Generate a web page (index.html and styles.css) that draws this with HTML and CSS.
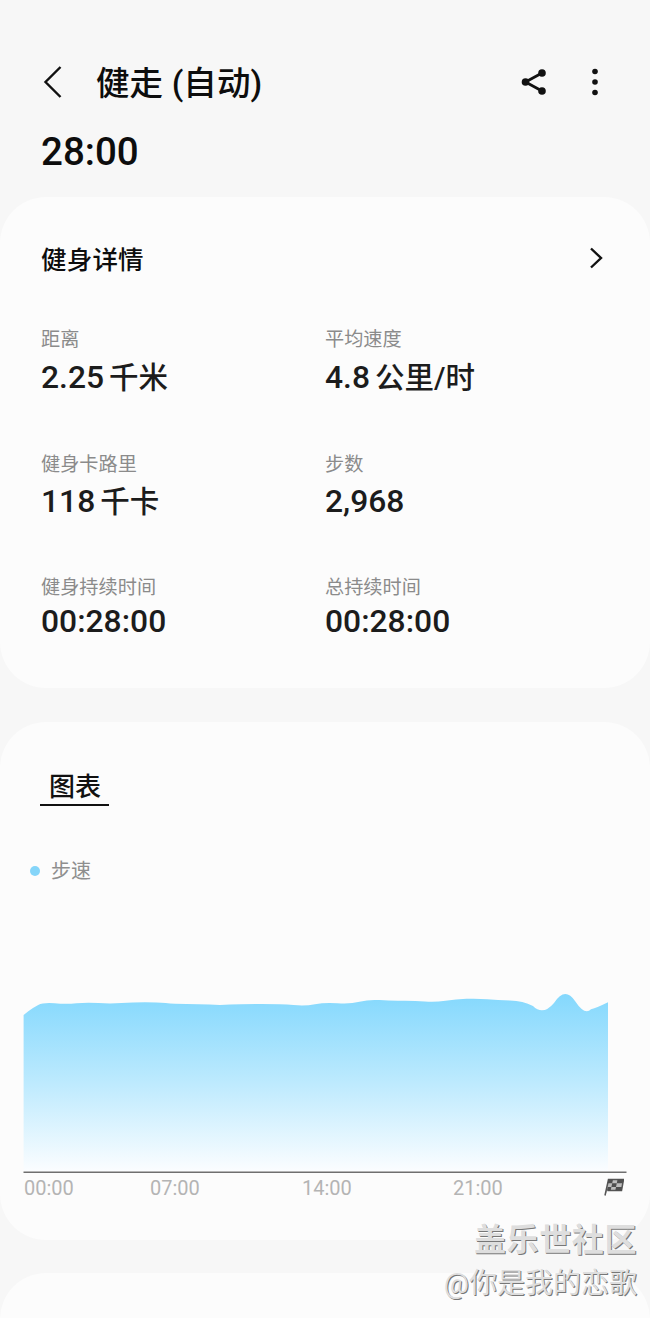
FILE: index.html
```html
<!DOCTYPE html>
<html lang="zh-CN">
<head>
<meta charset="utf-8">
<title>健走 (自动)</title>
<link rel="stylesheet" href="styles.css">
</head>
<body>
<div class="page">
  <header class="topbar">
    <svg class="icon-back" viewBox="0 0 22 34" width="22" height="34"><path d="M18.500 2 L3.500 17 L18.500 32" fill="none" stroke="#111" stroke-width="2.400"/></svg>
    <h1 class="title">健走 (自动)</h1>
    <svg class="icon-share" viewBox="0 0 26 28" width="26" height="28"><g fill="#111"><circle cx="21" cy="5" r="3.800"/><circle cx="21" cy="23" r="3.800"/><circle cx="4.500" cy="14" r="3.800"/></g><path d="M21 5 L4.500 14 L21 23" fill="none" stroke="#111" stroke-width="2.800"/></svg>
    <svg class="icon-more" viewBox="0 0 8 28" width="8" height="28"><g fill="#111"><circle cx="4" cy="3.500" r="2.800"/><circle cx="4" cy="14" r="2.800"/><circle cx="4" cy="24.500" r="2.800"/></g></svg>
  </header>
  <div class="duration">28:00</div>

  <section class="card card-details">
    <div class="card-head">
      <h2 class="card-title">健身详情</h2>
      <svg class="icon-next" viewBox="0 0 14 22" width="14" height="22"><path d="M2 1.500 L12 11 L2 20.500" fill="none" stroke="#111" stroke-width="2.400"/></svg>
    </div>
    <div class="stats">
      <div class="stat"><div class="stat-label">距离</div><div class="stat-value">2.25 <span class="unit">千米</span></div></div>
      <div class="stat"><div class="stat-label">平均速度</div><div class="stat-value">4.8 <span class="unit">公里/时</span></div></div>
      <div class="stat stat-mid"><div class="stat-label">健身卡路里</div><div class="stat-value">118 <span class="unit">千卡</span></div></div>
      <div class="stat stat-mid"><div class="stat-label">步数</div><div class="stat-value">2,968</div></div>
      <div class="stat stat-tight"><div class="stat-label">健身持续时间</div><div class="stat-value">00:28:00</div></div>
      <div class="stat stat-tight"><div class="stat-label">总持续时间</div><div class="stat-value">00:28:00</div></div>
    </div>
  </section>

  <section class="card card-chart">
    <div class="tab">图表</div>
    <div class="legend"><span class="legend-dot"></span><span class="legend-text">步速</span></div>
    <svg class="chart" viewBox="0 -10 650 193" width="650" height="193">
      <defs>
        <linearGradient id="pace" x1="0" y1="0" x2="0" y2="1">
          <stop offset="0" stop-color="#84d8fd"/>
          <stop offset="0.5" stop-color="#bdeafe"/>
          <stop offset="1" stop-color="#fbfdff"/>
        </linearGradient>
      </defs>
      <path fill="url(#pace)" d="M23.600 25 L28.300 21.300 Q33 17.700 38.200 15 Q43.500 12.300 54.700 13.300 Q66 14.300 76.500 13.300 Q87 12.300 98.500 13.100 Q110 14 121.500 13.100 Q133 12.300 145 12.300 Q157.500 12.300 165.700 13.100 Q174 14 186.500 14 Q199 14 209.500 14.600 Q220 15.300 230 14.600 Q240 14 261 14 Q282 14 293.500 15.100 Q305 16.300 315 14.300 Q325 12.300 337.500 13.300 Q350 14.300 359.500 11.800 Q369 9.300 379.500 10.100 Q390 11 402.300 10.800 Q414.600 10.700 424.800 11.500 Q435 12.300 445.500 10.800 Q456 9.300 466.500 8.800 Q477 8.300 487.200 9.300 Q497.500 10.300 510 10.500 Q523 10.700 533 16 Q543 26 554 13 Q565 -4 575 11 Q585 26 591 19.200 Q597 17.700 608 12.300 V181 H23.600 Z"/>
      <rect x="23.500" y="181.500" width="603" height="1.500" fill="#6f6f6f"/>
    </svg>
    <div class="axis">
      <span class="tick tick-a">00:00</span>
      <span class="tick tick-b">07:00</span>
      <span class="tick tick-c">14:00</span>
      <span class="tick tick-d">21:00</span>
      <svg class="flag" viewBox="0 0 20 18" width="20" height="18">
        <path d="M1 17.500 L4.500 1.500 H19.500 L17.500 12.500 H3.500" fill="#bdbdbd" stroke="#555" stroke-width="1.500"/>
        <path d="M4.500 1.500 H9 L8.200 5.200 H3.700Z M13.500 1.500 H19.500 L18.800 5.200 H12.800Z M8.200 5.200 H12.800 L12 8.900 H7.400Z M3.700 8.900 H7.400 L6.700 12.500 H3Z M12 8.900 H18.100 L17.500 12.500 H11.300Z" fill="#4f4f4f"/>
      </svg>
    </div>
  </section>

  <section class="card card-next"></section>

  <div class="watermark">
    <div class="wm-brand">盖乐世社区</div>
    <div class="wm-user">@你是我的恋歌</div>
  </div>
</div>
</body>
</html>
```
FILE: styles.css
```css
html, body { margin: 0; padding: 0; }
body { background: #f7f7f7; font-family: Roboto, "Noto Sans CJK SC", "Noto Sans", sans-serif; color: #111; }
.page { position: relative; width: 650px; height: 1318px; overflow: hidden; padding-top: 60px; box-sizing: border-box; }

.topbar { display: flex; align-items: center; height: 48px; padding-left: 42px; }
.icon-back { flex: none; margin-top: -4px; }
.title { margin: 0 0 0 32px; flex: 1; font-size: 33.500px; line-height: 48px; font-weight: 500; letter-spacing: 0.1px; color: #0d0d0d; }
.icon-share { flex: none; margin: -4px 44px 0 0; }
.icon-more { flex: none; margin: -4px 51px 0 0; }

.duration { margin: 20px 0 0 41px; height: 48px; font-size: 38.500px; line-height: 48px; font-weight: 500; color: #0d0d0d; }

.card { background: #fcfcfc; border-radius: 46px; }
.card-details { margin-top: 21px; height: 491px; box-sizing: border-box; padding: 43px 47px 0 41px; }
.card-chart { margin-top: 34px; height: 518px; box-sizing: border-box; padding-top: 45px; }
.card-next { margin-top: 33px; height: 120px; }

.card-head { display: flex; align-items: center; justify-content: space-between; height: 40px; }
.card-title { margin: 0; font-size: 25.500px; line-height: 40px; font-weight: 500; letter-spacing: 0.2px; color: #0d0d0d; }
.icon-next { margin-top: -5px; }

.stats { display: grid; grid-template-columns: 284px 1fr; row-gap: 53px; margin-top: 46px; }
.stat-label { font-size: 19.200px; line-height: 28px; color: #8b8b8b; }
.stat-value { margin: 3px 0 1px; height: 40px; font-size: 31.800px; line-height: 40px; font-weight: 500; color: #1c1c1c; white-space: nowrap; word-spacing: -3px; }
.unit { font-size: 29.500px; line-height: 30px; }
.stat-mid .stat-value { margin: 2px 0 0; }
.stat-tight .stat-value { margin: -1px 0 0; }

.tab { width: 69px; margin-left: 40px; box-sizing: border-box; padding-left: 9px; height: 39px; border-bottom: 2.500px solid #111; font-size: 26px; line-height: 41px; font-weight: 500; }
.legend { display: flex; align-items: center; margin: 51px 0 0 30px; height: 28px; }
.legend-dot { width: 10px; height: 10px; border-radius: 50%; background: #85d5f9; }
.legend-text { margin-left: 11px; font-size: 20px; line-height: 28px; color: #8e8e8e; }

.chart { display: block; margin-top: 95px; }
.axis { display: flex; align-items: center; height: 28px; padding: 1px 0 0 24px; }
.tick { font-size: 20px; line-height: 28px; color: #b4b4b4; flex: none; }
.tick-a { width: 126px; }
.tick-b { width: 152px; }
.tick-c { width: 151px; }
.tick-d { width: 151px; }
.flag { margin-top: -3px; }

.watermark { position: absolute; right: 13px; top: 1219px; text-align: right; color: #dedede; text-shadow: 1px 1px 0 #777, -0.5px -0.5px 0 #fff; white-space: nowrap; }
.wm-brand { font-size: 32px; line-height: 42px; font-weight: 700; letter-spacing: 0.6px; }
.wm-user { font-size: 28px; line-height: 36px; margin-top: 5px; }
```
